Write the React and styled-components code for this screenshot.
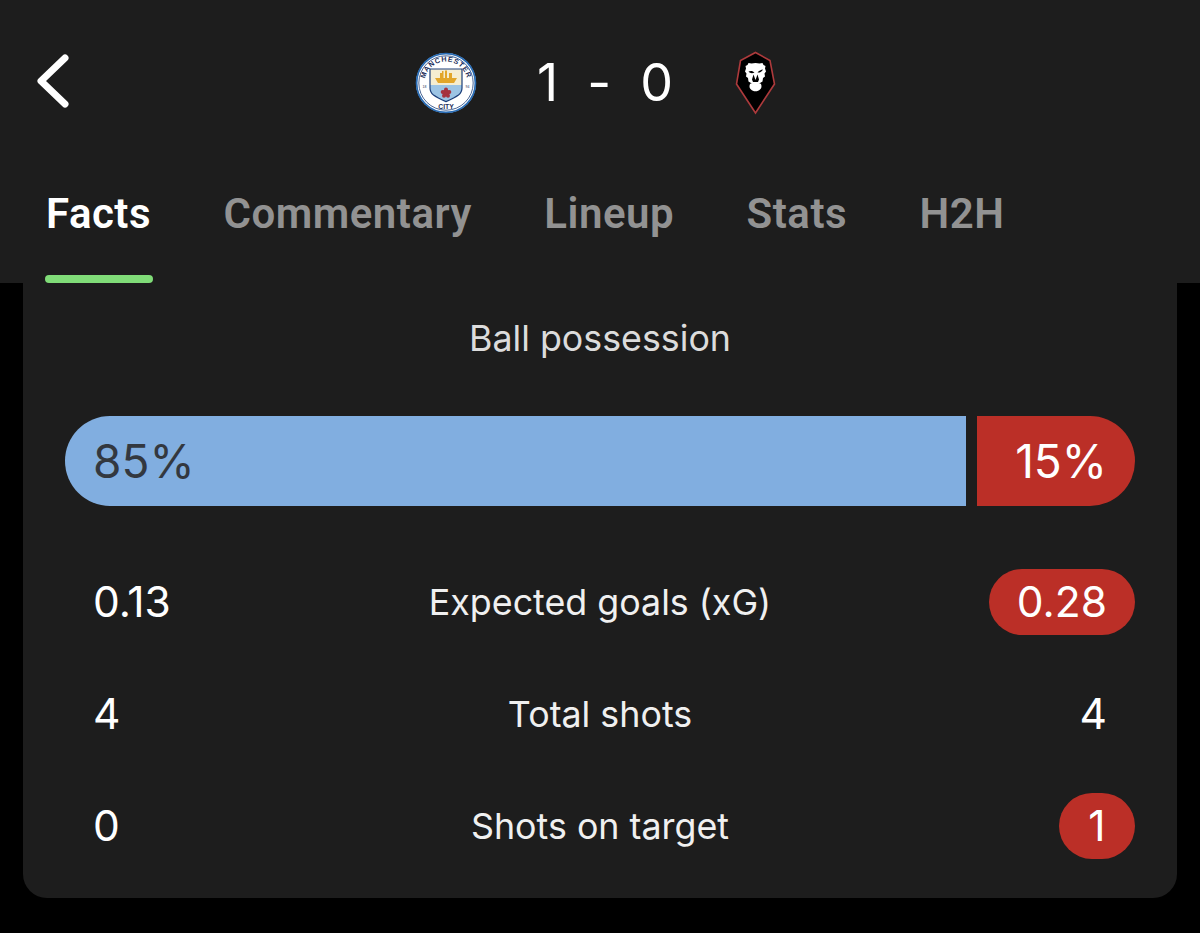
import styled, { createGlobalStyle } from "styled-components";

const Global = createGlobalStyle`
  html, body { margin: 0; padding: 0; background: #000; }
  body { font-family: "Inter", "Liberation Sans", sans-serif; }
`;

const Page = styled.div`
  width: 1200px;
  height: 933px;
  overflow: hidden;
  background: #000;
`;

const Header = styled.header`
  height: 283px;
  box-sizing: border-box;
  background: #1d1d1d;
  padding-top: 46px;
`;

const ScoreRow = styled.div`
  display: grid;
  grid-template-columns: 1fr auto 1fr;
  align-items: center;
  height: 74px;
  padding-left: 34px;
`;

const BackButton = styled.div`
  display: flex;
  align-items: center;
`;

const Match = styled.div`
  display: flex;
  align-items: center;
  margin-left: -42px;
`;

const Score = styled.div`
  display: flex;
  justify-content: space-between;
  width: 136px;
  margin: 0 62px 0 60px;
  font-size: 52px;
  font-weight: 400;
  line-height: 74px;
  color: #fff;
`;

const Tabs = styled.nav`
  display: flex;
  gap: 72.5px;
  margin-top: 69px;
  padding-left: 46px;
`;

const Tab = styled.div`
  position: relative;
  height: 50px;
  font-family: "Roboto", "Liberation Sans", sans-serif;
  font-size: 42px;
  font-weight: 600;
  letter-spacing: 0.5px;
  line-height: 50px;
  color: ${(p) => (p.$active ? "#fff" : "#929292")};
`;

const Indicator = styled.div`
  position: absolute;
  left: -1px;
  right: -2px;
  top: 86px;
  height: 8px;
  border-radius: 5px;
  background: #80dc78;
`;

const Card = styled.section`
  box-sizing: border-box;
  width: 1154px;
  height: 615px;
  margin: 0 23px;
  padding: 0 42px;
  background: #1d1d1d;
  border-radius: 0 0 24px 24px;
`;

const Heading = styled.h3`
  margin: 0;
  padding-top: 32px;
  height: 133px;
  box-sizing: border-box;
  font-size: 35.8px;
  font-weight: 400;
  line-height: 46px;
  text-align: center;
  color: #dcdcdc;
`;

const Possession = styled.div`
  display: flex;
  gap: 11px;
  height: 90px;
  margin-bottom: 63px;
`;

const Bar = styled.div`
  display: flex;
  align-items: center;
  box-sizing: border-box;
  font-size: 46px;
  justify-content: ${(p) => (p.$side === "home" ? "flex-start" : "flex-end")};
  padding: ${(p) => (p.$side === "home" ? "0 0 0 28px" : "0 28px 0 0")};
  border-radius: ${(p) => (p.$side === "home" ? "45px 0 0 45px" : "0 45px 45px 0")};
  background: ${(p) => (p.$side === "home" ? "#81aee0" : "#bb2f27")};
  color: ${(p) => (p.$side === "home" ? "#33383f" : "#fff")};
`;

const StatRow = styled.div`
  display: grid;
  grid-template-columns: 1fr auto 1fr;
  align-items: center;
  height: 66px;
  margin-bottom: 46px;
`;

const StatName = styled.div`
  font-size: 35.8px;
  line-height: 66px;
  color: #f0f0f0;
  text-align: center;
`;

const Value = styled.div`
  justify-self: ${(p) => (p.$right ? "end" : "start")};
  box-sizing: border-box;
  height: 66px;
  min-width: 76px;
  padding: ${(p) => (p.$right ? "0 28px" : "0 29px 0 28px")};
  border-radius: 33px;
  font-size: 42.5px;
  line-height: 66px;
  text-align: center;
  color: #fff;
  background: ${(p) => (p.$win ? "#bb2f27" : "transparent")};
`;

const SHIELD = "M15 17h32v19c0 3-1 5-3.500 7c-3.500 2.600-8 4.600-12.500 6.600c-4.500-2-9-4-12.500-6.600C16 41 15 39 15 36z";
const crestFont = "Liberation Sans, sans-serif";

const CityCrest = () => (
  <svg width="62" height="62" viewBox="0 0 62 62">
    <defs>
      <path id="crest-top" d="M10.800 38.400A21.500 21.500 0 1 1 51.200 38.400" />
      <clipPath id="crest-shield">
        <path d={SHIELD} />
      </clipPath>
    </defs>
    <circle cx="31" cy="31" r="30" fill="#fff" />
    <circle cx="31" cy="31" r="29.400" fill="none" stroke="#2a6cb4" strokeWidth="1.800" />
    <circle cx="31" cy="31" r="27.200" fill="none" stroke="#1c3f7a" strokeWidth="0.800" />
    <text fontFamily={crestFont} fontSize="7.200" fontWeight="700" fill="#1d2f5a" letterSpacing="0.800">
      <textPath href="#crest-top" startOffset="50%" textAnchor="middle">MANCHESTER</textPath>
    </text>
    <text x="31" y="56.500" textAnchor="middle" fontFamily={crestFont} fontSize="6.800" fontWeight="700" fill="#1d2f5a">
      CITY
    </text>
    <text x="9.500" y="36" textAnchor="middle" fontFamily={crestFont} fontSize="3.500" fill="#1d2f5a">18</text>
    <text x="52.500" y="36" textAnchor="middle" fontFamily={crestFont} fontSize="3.500" fill="#1d2f5a">94</text>
    <g clipPath="url(#crest-shield)">
      <rect x="15" y="17" width="32" height="16" fill="#f5edd0" />
      <rect x="15" y="33" width="32" height="17" fill="#9cc4e4" />
      <path d="M20 26h22l-3 5H23z" fill="#e2a62a" />
      <path d="M25 26v-5h2v-2h1.500v7zM30 26v-7.500h2V26zM34 26v-5h3v5z" fill="#e2a62a" />
    </g>
    <path d={SHIELD} fill="none" stroke="#1c3f7a" strokeWidth="1.200" />
    <circle cx="31" cy="41" r="3.400" fill="#a5333f" />
    <circle cx="31" cy="37.600" r="2" fill="#a5333f" />
    <circle cx="34.300" cy="40" r="2" fill="#a5333f" />
    <circle cx="27.700" cy="40" r="2" fill="#a5333f" />
    <circle cx="33" cy="43.800" r="2" fill="#a5333f" />
    <circle cx="29" cy="43.800" r="2" fill="#a5333f" />
  </svg>
);

const LionCrest = () => (
  <svg width="42" height="64" viewBox="0 0 42 64">
    <path d="M20.500 1.500L35 9.500L39.500 33L20.500 62L1.500 33L5.500 9.500Z" fill="#000" stroke="#ad3a3c" strokeWidth="1.600" />
    <path
      d="M20.500 12l4 .5l3-.5l1 2l2 1l-.5 2.500l1 3l-1.500 2l.5 3l-2 1.500l-.5 3.500l-2.500 1.500h-9l-2.500-1.500l-.5-3.500l-2-1.500l.5-3l-1.500-2l1-3l-.5-2.500l2-1l1-2l3 .5z"
      fill="#fff"
    />
    <path d="M13.500 20.500c2-1 4.500-.8 6 1c-2 1-4.500 1-6-1zM28 18.500c-2 .2-4 1.200-5.500 3c2 .4 4.500-.6 5.500-3z" fill="#000" />
    <path d="M18.500 23.500l2 5.500l2-5.500l1.500 5l-1 2.500h-5l-1-2.500z" fill="#000" />
    <path d="M15 33c1.500-1 3.500-1.500 5.500-1.500s4 .5 5.500 1.500c1 2.500.5 4.500-1 5.500c-1 1.200-2.700 1.800-4.500 1.800s-3.500-.6-4.500-1.800c-1.500-1-2-3-1-5.500z" fill="#fff" />
  </svg>
);

const BackIcon = () => (
  <svg width="38" height="58" viewBox="0 0 38 58">
    <path d="M31 4L7 27L31 50" fill="none" stroke="#fff" strokeWidth="7" strokeLinecap="round" strokeLinejoin="round" />
  </svg>
);

const tabs = ["Facts", "Commentary", "Lineup", "Stats", "H2H"];

const stats = [
  { name: "Expected goals (xG)", home: "0.13", away: "0.28", awayWin: true },
  { name: "Total shots", home: "4", away: "4" },
  { name: "Shots on target", home: "0", away: "1", awayWin: true },
];

export default function App() {
  return (
    <Page>
      <Global />
      <Header>
        <ScoreRow>
          <BackButton>
            <BackIcon />
          </BackButton>
          <Match>
            <CityCrest />
            <Score>
              <span>1</span>
              <span>-</span>
              <span>0</span>
            </Score>
            <LionCrest />
          </Match>
        </ScoreRow>
        <Tabs>
          {tabs.map((t, i) => (
            <Tab key={t} $active={i === 0}>
              {t}
              {i === 0 && <Indicator />}
            </Tab>
          ))}
        </Tabs>
      </Header>
      <Card>
        <Heading>Ball possession</Heading>
        <Possession>
          <Bar $side="home" style={{ width: "901px" }}>85%</Bar>
          <Bar $side="away" style={{ width: "158px" }}>15%</Bar>
        </Possession>
        {stats.map((s) => (
          <StatRow key={s.name}>
            <Value>{s.home}</Value>
            <StatName>{s.name}</StatName>
            <Value $right $win={s.awayWin}>{s.away}</Value>
          </StatRow>
        ))}
      </Card>
    </Page>
  );
}
